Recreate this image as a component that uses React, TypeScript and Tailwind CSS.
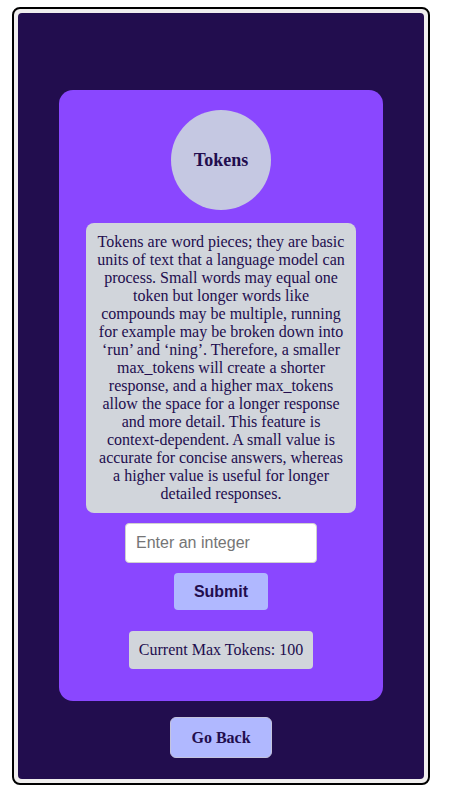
import React from 'react';

function TokensPage() {
	return (
		<div className="pl-[12px] pt-[7px]">
			<div className="w-[418px] h-[778px] border-2 border-black rounded-[8px] bg-[#f0eeee] p-[4px]">
				<div className="h-full rounded-[4px] bg-[#220d4e] flex flex-col items-center pt-[77px] font-['Liberation_Serif','Times_New_Roman',serif] text-[#220d4e]">
					<div className="w-[324px] rounded-[14px] bg-[#8a47ff] flex flex-col items-center pt-[20px] pb-[32px]">
						<div className="w-[100px] h-[100px] rounded-full bg-[#c5c8e2] flex items-center justify-center text-[18px] font-bold">
							Tokens
						</div>
						<div className="mt-[13px] w-[270px] rounded-[8px] bg-[#d1d5db] px-[9px] py-[10px] text-center text-[16px] leading-[18px]">
							Tokens are word pieces; they are basic units of text that a language model can process. Small words may
							equal one token but longer words like compounds may be multiple, running for example may be broken down
							into ‘run’ and ‘ning’. Therefore, a smaller max_tokens will create a shorter response, and a higher
							max_tokens allow the space for a longer response and more detail. This feature is context-dependent. A
							small value is accurate for concise answers, whereas a higher value is useful for longer detailed
							responses.
						</div>
						<input
							type="text"
							placeholder="Enter an integer"
							className="mt-[10px] w-[192px] h-[40px] rounded-[4px] bg-white px-[10px] text-[16px] text-black placeholder:text-[#757575] outline-none border border-[#d0d0d0] font-['Liberation_Sans',Arial,sans-serif]"
						/>
						<button className="mt-[10px] w-[94px] h-[37px] rounded-[4px] bg-[#b0b8ff] text-[16px] font-bold font-['Liberation_Sans',Arial,sans-serif]">
							Submit
						</button>
						<div className="mt-[21px] w-[184px] h-[38px] rounded-[4px] bg-[#d1d5db] flex items-center justify-center text-[16px]">
							Current Max Tokens: 100
						</div>
					</div>
					<button className="mt-[16px] w-[102px] h-[41px] rounded-[6px] border border-[#c3c3dd] bg-[#b0b8ff] text-[16px] font-bold">
						Go Back
					</button>
				</div>
			</div>
		</div>
	);
}

export default function App() {
	return <TokensPage />;
}
